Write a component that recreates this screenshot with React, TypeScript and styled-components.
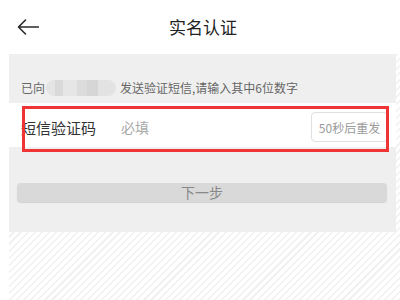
import styled, { createGlobalStyle } from "styled-components";

const GlobalStyle = createGlobalStyle`
  html, body {
    margin: 0;
    padding: 0;
    background: #fff;
  }
  body {
    font-family: "Noto Sans CJK SC", "Noto Sans", sans-serif;
  }
  * {
    box-sizing: border-box;
  }
`;

const hatch = `repeating-linear-gradient(
  135deg,
  #f1f1f1 0px,
  #f1f1f1 1.5px,
  #ffffff 1.5px,
  #ffffff 5px
)`;

const Page = styled.div`
  width: 400px;
  height: 300px;
  display: flex;
  flex-direction: column;
  overflow: hidden;
`;

const Header = styled.header`
  height: 54px;
  display: grid;
  grid-template-columns: 1fr auto 1fr;
  align-items: center;
  padding-left: 6px;
  background: #fff;
`;

const BackButton = styled.button`
  justify-self: start;
  margin-left: 11px;
  padding: 0;
  border: none;
  background: none;
  display: flex;
  align-items: center;
  color: #2a2a2a;
`;

const Title = styled.h1`
  margin: 0;
  font-size: 17px;
  font-weight: 400;
  color: #222;
  line-height: 20px;
`;

const Body = styled.div`
  flex: 1;
  display: flex;
  background: ${hatch};
`;

const Gutter = styled.div`
  width: 9px;
  background: #fff;
`;

const Main = styled.main`
  width: 387px;
  display: flex;
  flex-direction: column;
`;

const Panel = styled.section`
  background: #efefef;
  padding-bottom: 30px;
`;

const Notice = styled.p`
  margin: 0;
  padding: 26px 12px 7px;
  font-size: 12px;
  line-height: 16px;
  color: #666;
  display: flex;
  align-items: center;
`;

const Masked = styled.span`
  display: inline-block;
  width: 70px;
  height: 16px;
  margin: 0 4px 0 1px;
  border-radius: 8px;
  background: linear-gradient(
    90deg,
    #e4e4e4 0 9px,
    #d9d9d9 9px 17px,
    #e6e6e6 17px 31px,
    #dcdcdc 31px 41px,
    #d6d6d6 41px 52px,
    #e3e3e3 52px
  );
`;

const Row = styled.div`
  position: relative;
  height: 44px;
  padding: 4px 8px 0 12px;
  display: flex;
  align-items: center;
  background: #fff;
`;

const Label = styled.span`
  width: 100px;
  flex-shrink: 0;
  font-size: 15px;
  color: #333;
`;

const CodeInput = styled.input`
  flex: 1;
  min-width: 0;
  border: none;
  outline: none;
  padding: 0;
  font-family: inherit;
  font-size: 14px;
  color: #333;
  background: transparent;

  &::placeholder {
    color: #aaa;
  }
`;

const ResendButton = styled.button`
  width: 77px;
  height: 30px;
  padding: 0;
  border: 1px solid #e0e0e0;
  border-radius: 4px;
  background: #fff;
  font-family: inherit;
  font-size: 12px;
  color: #9a9a9a;
`;

const Highlight = styled.div`
  position: absolute;
  left: 13px;
  top: 3px;
  width: 367px;
  height: 46px;
  border: 3px solid #ee3434;
  pointer-events: none;
`;

const NextButton = styled.button`
  display: block;
  width: 370px;
  height: 19px;
  margin: 36px 0 0 8px;
  padding: 0;
  border: none;
  border-radius: 4px;
  background: #d9d9d9;
  box-shadow: 0 1px 1px rgba(0, 0, 0, 0.12);
  font-family: inherit;
  font-size: 14px;
  line-height: 19px;
  color: #888;
`;

const RightEdge = styled.div`
  flex: 1;
`;

const BackArrow = () => (
  <svg width="22" height="16" viewBox="0 0 22 16" fill="none">
    <path
      d="M21.5 8H1.5M8.5 1L1.5 8L8.5 15"
      stroke="currentColor"
      strokeWidth="1.6"
      strokeLinecap="round"
      strokeLinejoin="round"
    />
  </svg>
);

export default function App() {
  return (
    <>
      <GlobalStyle />
      <Page>
        <Header>
          <BackButton aria-label="返回">
            <BackArrow />
          </BackButton>
          <Title>实名认证</Title>
          <span />
        </Header>
        <Body>
          <Gutter />
          <Main>
            <Panel>
              <Notice>
                已向
                <Masked />
                发送验证短信,请输入其中6位数字
              </Notice>
              <Row>
                <Label>短信验证码</Label>
                <CodeInput placeholder="必填" />
                <ResendButton>50秒后重发</ResendButton>
                <Highlight />
              </Row>
              <NextButton>下一步</NextButton>
            </Panel>
          </Main>
          <RightEdge />
        </Body>
      </Page>
    </>
  );
}
